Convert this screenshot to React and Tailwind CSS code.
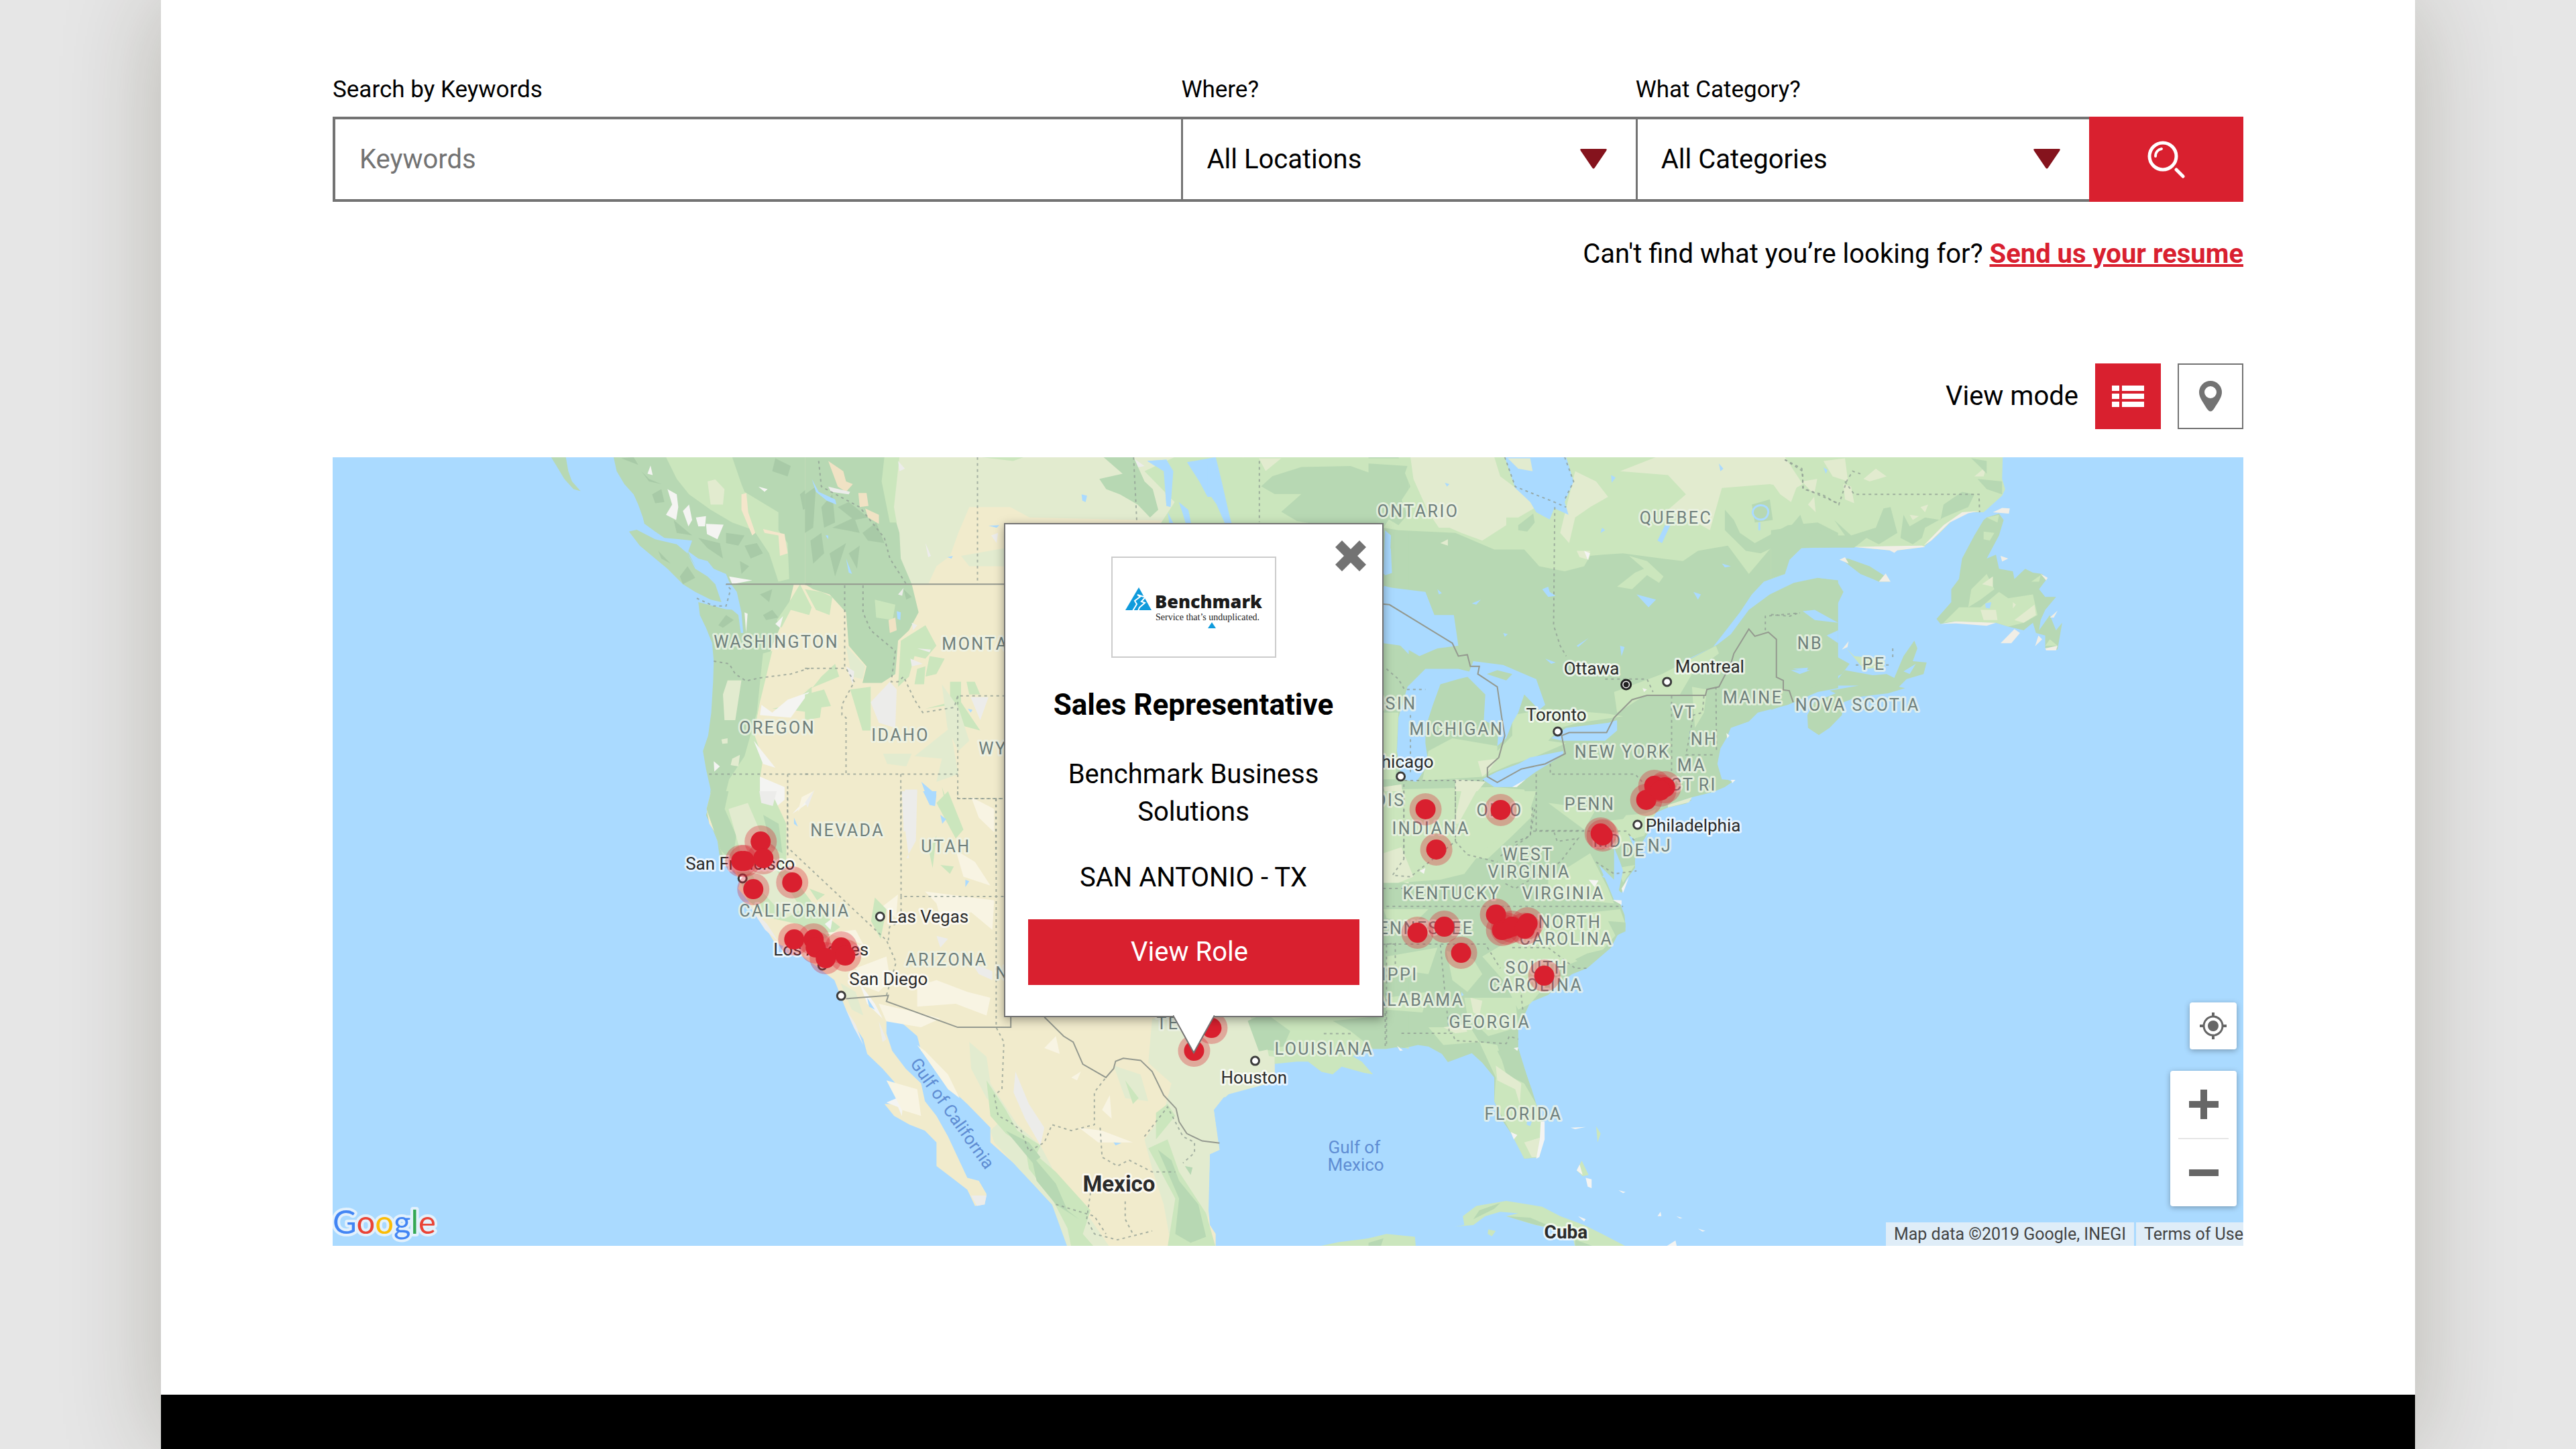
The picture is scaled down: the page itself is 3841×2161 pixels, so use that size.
import { useState } from "react";

const SEA = "#aadaff";
const FOREST = "#b7d8b3";
const LIGHT = "#cbe6bd";
const PALE = "#e2ebcf";
const TAN = "#f1ebcc";
const HILL = "#a8caa7";
const SNOW = "#f4f4f2";
const CREAM = "#f8f4e3";

// Each survey sheet has its own origin and scale inside the map
const SHEETS = {
  northwest: "translate(490 680) scale(0.4592 0.3827)",
  southwest: "translate(1000 1180) scale(0.574 0.44)",
  plains: "translate(1200 680) scale(0.4082 0.3827)",
  central: "translate(1800 680) scale(0.3333 0.7589)",
  northeast: "translate(2040 680) scale(0.4464 0.3827)",
  atlantic: "translate(2640 680) scale(0.4592 0.3827)",
  southeast: "translate(2040 1180) scale(0.4464 0.44)",
};

const SHAPES = [
  // land
  ["northwest", FOREST, "M925 5L935 60 960 110 990 150 1005 190 1020 240 1025 265 1060 295 1090 320 1140 325 1180 330 1165 380 1190 430 1230 460 1280 490 1300 540 1320 600 1290 598 1200 570 1205 620 1225 670 1245 730 1250 800 1248 880 1242 1000 1232 1090 1215 1150 1225 1220 1240 1300 1235 1360 1225 1400 1245 1450 1262 1500 1270 1568H1600V5Z"],
  ["northwest", FOREST, "M975 295L1000 288 1060 325 1130 345 1165 380 1190 440 1230 470 1255 500 1275 570 1240 560 1190 530 1150 500 1100 440 1060 400 1010 350Z"],
  ["northwest", FOREST, "M722 5H770L778 60 790 100 818 138 795 130 765 90 740 40Z"],
  ["southwest", TAN, "M105 0L93 60 100 110 120 150 130 200 165 270 180 310 175 330 200 370 225 430 245 460 268 510 330 550 375 590 425 640 440 690 455 740 475 790 500 840 510 890 550 940 590 1000 605 1040 590 1060 555 1060 580 1100 620 1130 660 1150 690 1190 690 1270 730 1310 770 1350 790 1405 815 1400 820 1365 800 1320 770 1310 745 1240 720 1170 690 1100 660 1050 650 990 610 940 575 880 560 820 560 770 600 785 640 830 650 880 690 920 720 1000 770 1060 830 1140 830 1190 890 1260 940 1330 990 1400 1010 1440 1030 1500 1030 1545H1415L1415 1500 1400 1470 1395 1400 1400 1230 1425 1215 1420 1180 1415 1130 1410 1080 1440 1030 1500 1000 1568 985V0Z"],
  ["plains", TAN, "M0 5H1640V1600H0Z"],
  ["central", LIGHT, "M0 0H900V1165L840 1158 800 1165 700 1165 650 1180 690 1190 740 1215 700 1212 600 1200 560 1215 510 1210 450 1190 400 1190 290 1195 250 1215 130 1240 80 1260H0Z"],
  ["northeast", FOREST, "M0 5H1568V355L1500 475 1568 485V905L1500 920 1440 950 1400 970 1300 1000 1270 1035 1210 1060 1195 1100 1175 1140 1165 1200 1180 1260 1200 1262 1215 1270 1190 1290 1150 1310 1080 1330 1040 1345 1080 1340 1060 1355 1000 1370 960 1390 940 1430 920 1480 880 1520 860 1568H0Z"],
  ["atlantic", LIGHT, "M0 5H752L750 90 760 130 750 155 690 220 640 220 590 250 540 310 495 355 400 370 270 355 100 358 60 405 45 460 0 478Z"],
  ["atlantic", FOREST, "M0 550L60 500 150 475 215 490 235 530 215 580 165 612 110 600 150 640 205 640 200 680 170 700 200 720 210 780 255 810 230 850 180 880 130 905 60 920 75 960 0 990Z"],
  ["atlantic", FOREST, "M200 895L240 835 330 855 375 850 400 865 430 780 465 720 475 750 460 800 505 805 495 850 440 870 415 900 435 905 380 925 280 940 235 960 230 1010 190 1060 155 1088 120 1060 118 1010 140 960 210 925 190 915 285 895Z"],
  ["atlantic", LIGHT, "M245 750L270 780 340 790 370 800 365 825 300 830Z"],
  ["atlantic", FOREST, "M700 240L740 225 755 250 740 310 700 400 730 385 740 440 785 450 790 480 825 440 850 455 880 460 895 480 870 520 890 550 925 550 890 600 875 640 870 680 905 620 925 680 945 650 930 755 890 750 890 700 860 690 850 650 820 680 770 665 730 650 690 655 600 645 550 655 537 635 585 570 585 520 610 480 620 400 660 310 690 250Z"],
  ["atlantic", FOREST, "M225 400L250 400 320 430 365 465 385 490 350 490 290 460Z"],
  ["southeast", FOREST, "M0 0H980L960 60 940 130 910 180 890 230 890 260 860 300 845 345 830 330 825 300 840 380 855 420 858 460 830 490 810 530 760 550 730 600 680 620 640 650 600 690 540 715 520 760 500 800 500 870 520 940 545 1010 560 1060 585 1130 585 1180 570 1240 520 1245 490 1180 450 1120 420 1050 420 970 380 920 345 888 265 918 245 890 200 865 165 860 120 870 50 865 0 865Z"],
  ["southeast", LIGHT, "M290 1475L320 1470 315 1440 360 1405 460 1388 580 1408 640 1440 720 1470 780 1500 865 1545H690L680 1500 600 1480 540 1465 460 1440 500 1430 440 1425 390 1440 350 1470Z"],
  ["southeast", LIGHT, "M-180 1545L-100 1528 0 1515 60 1500 155 1510 158 1545Z"],
  ["southeast", LIGHT, "M400 1485L425 1490 412 1508 398 1500ZM695 1285L712 1252 735 1300 715 1305ZM760 1135L775 1160 765 1190Z"],

  // canadian interior
  ["northwest", LIGHT, "M1095 5H1310L1340 110 1350 140 1460 220 1460 290 1490 340 1495 480 1460 490 1430 380 1380 290 1310 260 1240 210 1170 150 1130 90Z"],
  ["northwest", PALE, "M1230 100L1255 92 1285 130 1280 190 1240 190Z"],
  ["northwest", "#f4e6cb", "M1340 150L1356 145 1362 220 1385 300 1375 310 1340 210ZM1410 285L1480 305 1490 380 1465 390 1460 310 1415 300Z"],
  ["northwest", TAN, "M1510 500H1600V1600H1490L1450 1400 1390 1240 1370 1150 1400 950 1410 860 1440 740 1490 600Z"],
  ["northwest", LIGHT, "M1410 770L1440 760 1400 960 1380 1080 1410 1180 1400 1260 1450 1400 1490 1600H1290L1265 1500 1270 1400 1300 1260 1350 1170 1390 1000Z"],
  ["northwest", PALE, "M1295 875H1340L1320 1030H1285L1280 930ZM1275 1105L1295 1100 1295 1120 1278 1122ZM1310 1180L1335 1165 1330 1210 1305 1205ZM1325 1390L1360 1365 1400 1440 1380 1520 1330 1500Z"],
  ["northwest", LIGHT, "M1455 640L1500 560 1530 500 1568 590 1560 620 1500 600 1470 670ZM1440 985L1500 970 1568 900V1000L1500 990Z"],
  ["northwest", HILL, "M1015 60L1040 90 1080 110 1040 100ZM1050 150L1080 130 1090 180 1060 185ZM1120 250L1150 280 1180 310 1130 300ZM1200 320L1270 340 1280 400 1230 360ZM1290 300L1350 310 1330 350 1290 340ZM1350 350L1390 340 1410 380 1370 400ZM1070 370L1110 420 1080 400ZM1140 470L1165 430 1190 475 1150 500ZM1265 660L1290 620 1315 640 1280 670ZM1400 540L1440 520 1430 570ZM1410 620L1440 600 1460 630 1420 640ZM1450 10L1500 40 1490 80 1440 60ZM1530 150L1560 120V200L1540 210ZM1335 410L1365 430 1340 460ZM950 10L990 5 1005 35Z"],
  ["northwest", SNOW, "M1100 130L1130 150 1135 200 1128 250 1095 230 1115 190ZM1150 215L1170 190 1180 250 1168 275ZM1192 240L1225 235 1222 275 1200 275ZM1225 265L1282 268 1262 325 1228 305ZM1035 70L1045 38 1052 75ZM1395 120L1425 130 1415 140ZM1300 470L1375 485 1310 500ZM1250 1190L1270 1210 1252 1230ZM1380 1110L1450 1215 1410 1200ZM1400 1250L1480 1290V1340L1450 1370 1400 1360ZM1490 950L1560 920 1500 1020 1400 1010 1405 970 1440 1000ZM1350 610L1360 615 1355 690ZM1505 1395L1555 1330 1560 1350ZM1450 655L1475 625 1465 670Z"],
  ["plains", PALE, "M300 5H1600V260L820 240 750 200 600 200 560 300 530 390 480 430 450 500 390 500 340 430 310 270Z"],
  ["plains", FOREST, "M0 5H310L290 80 325 230 345 300 350 400 390 500 415 610 380 680 340 720 330 850 280 885 210 885 225 820 160 740 150 610 90 540 30 520 0 500Z"],
  ["plains", LIGHT, "M290 5H345L325 200 335 260 310 260 280 100ZM255 560L330 580 320 640 260 630ZM350 720L440 660 480 740 440 790 400 780 380 860 340 900ZM440 860L455 780 510 790 480 850ZM400 890L410 830 440 820 435 890ZM165 910L240 900 240 1070 210 1070ZM530 880H570V960L640 1070 570 1050 530 970 440 985 530 960ZM0 930L70 910 95 975 60 980 55 1020 0 1030ZM0 520L40 600 90 620 100 550 60 530ZM500 1290L520 1350 550 1480 530 1450ZM60 860L110 810 125 860 0 915 30 900ZM590 880L620 880 640 930 600 930Z"],
  ["plains", PALE, "M150 740L220 820 210 870 170 860ZM285 1160L390 1160 370 1210 300 1200ZM400 1170L530 1060 560 1240 480 1270 500 1180ZM570 390L730 360V430L600 430ZM500 890L560 980 600 1110 560 1150 520 1060Z"],
  ["plains", HILL, "M0 150L40 120 30 280 0 300ZM60 200L100 150 110 260 70 280ZM20 330L60 300 70 380 30 420ZM100 280L180 240 200 300 150 290ZM160 380L200 350 190 440ZM210 300L260 260 290 340 230 330ZM90 380L150 340 110 470ZM120 200L160 180 230 240 180 250ZM360 520L390 550 370 560Z"],
  ["plains", "#f0e2c4", "M85 20L140 60 150 100 175 110 150 140 120 120ZM195 145L225 145 232 195 200 200ZM220 205L270 230V265L230 240ZM305 640L330 630 335 680 310 690Z"],
  ["plains", "#ececea", "M240 960L310 880 335 910 330 1060 270 1040ZM605 940H670L640 1030ZM85 120L165 140 160 150 95 140ZM150 820L180 840 175 890ZM365 1300L410 1300 405 1500 370 1568H380L365 1450ZM340 20L365 50 345 60ZM340 540L360 515 355 545ZM390 650L410 660 395 680ZM410 750L460 755 455 765ZM385 790L430 810 390 820ZM0 1350L35 1300 10 1370ZM1200 10L1240 40 1215 45ZM680 310L705 300 700 340ZM440 340L460 390 450 395Z"],
  ["plains", SEA, "M25 90L50 140 110 170 115 190 80 175 40 140ZM75 310L85 310 85 325ZM150 400L172 460 160 455ZM335 605L350 610 348 640 338 635ZM1010 150L1030 155 1025 180 1013 175ZM1250 20L1320 15 1345 60 1335 190 1320 195 1310 60ZM1370 180L1400 210 1415 260 1395 255ZM670 272L710 270 700 280ZM425 1270L480 1320 475 1365 455 1360ZM595 985L612 990 605 1000ZM520 395L540 390 535 400Z"],
  ["plains", FOREST, "M1090 5H1200L1240 100 1270 130 1290 210 1260 240 1215 190 1150 150 1100 130 1075 90 1160 70Z"],
  ["plains", LIGHT, "M1240 60L1350 5H1600V262H1300L1350 180ZM640 5H800L760 20Z"],
  ["plains", SEA, "M1250 20L1320 15 1345 60 1335 200 1320 195 1310 60ZM1395 25L1500 5 1520 90 1550 180 1580 262H1540L1520 160 1470 160 1440 100ZM1365 180L1400 210 1410 262H1390L1375 210ZM1325 220L1345 262H1330Z"],
  ["central", LIGHT, "M40 5H900V140H110Z"],
  ["central", FOREST, "M240 60L290 40 420 22 640 20 800 45 900 25V140H560L400 128 330 110 420 75 300 75ZM785 150H900V270L785 260Z"],
  ["central", PALE, "M230 5H330L260 30ZM780 760L860 790 900 820V840L785 830Z"],
  ["central", SEA, "M0 20L20 5 60 65 110 135H80L40 95 0 70ZM790 185L820 182 825 230 792 235ZM790 255L900 270V390L790 340Z"],

  // california and mexico
  ["southwest", LIGHT, "M105 0H260L300 110V250L340 330 380 400 440 460 400 500 330 450 260 430 200 370 170 270 130 200 93 60Z"],
  ["southwest", FOREST, "M105 0H150L140 60 170 150 160 240 130 200 93 60ZM240 80L280 110 290 210 260 190Z"],
  ["southwest", PALE, "M150 60L200 40 240 160 280 280 340 400 300 430 230 330 180 200ZM440 650L480 680 500 760 470 740Z"],
  ["southwest", "#ececea", "M230 0H275L265 50 235 40ZM600 0H640L630 100 605 140ZM455 740L480 790 500 860 475 800ZM205 390L250 450 280 510 245 470ZM540 780L560 840 550 850ZM895 950L930 1060 970 1140 960 1200 920 1110 890 1020ZM780 1370L820 1370 815 1400 795 1405ZM960 1270L1010 1330 1000 1340ZM1010 1430L1028 1490 1020 1490ZM690 490L720 500 700 530ZM780 580L835 610V640L800 620Z"],
  ["southwest", SNOW, "M490 650L530 720 550 770 510 720ZM560 1055L605 1030 600 1100 590 1070ZM400 450L420 430 415 470Z"],
  ["southwest", CREAM, "M480 600L560 560 570 640 540 680 500 660ZM550 390L590 350 585 430ZM660 340L840 370 835 470 780 410 700 430 690 380ZM690 640L770 680 830 700 820 760 740 720 640 730 640 660ZM640 860L660 880 720 960 750 1040 720 1010ZM540 720L640 750 700 770 650 800 560 780ZM560 980L640 1010 650 1100 600 1080ZM970 870L1000 830 1010 890ZM1060 1140L1120 1150 1200 1190 1110 1190ZM1040 970L1065 950 1055 980ZM400 480L480 470 500 520 460 500ZM740 200L790 240 830 320 760 290ZM780 20L840 60V140L800 90ZM340 20L370 0 330 70ZM1120 1080L1140 1030 1145 1110Z"],
  ["southwest", PALE, "M775 850L820 900 830 990 860 1050 900 1130 960 1200 1000 1300 1040 1400 1090 1450 1140 1545H1030L990 1400 940 1330 890 1260 840 1190 830 1150 870 1100 820 1040 780 940ZM1250 770H1568V985L1440 1030 1410 1080 1425 1215 1400 1230 1395 1500 1415 1545H1300L1280 1400 1250 1280 1230 1180 1280 1090 1300 990 1240 920ZM1150 930L1220 960 1240 1050 1180 1040Z"],
  ["southwest", LIGHT, "M820 980L870 1080 900 1150 960 1200 950 1230 870 1160 830 1100ZM1260 1090L1290 1060 1310 1100 1260 1180ZM920 1200L1000 1290 1090 1420 1070 1500 1100 1545H1040L1030 1480 990 1380 930 1280ZM1240 1210L1290 1180 1320 1290 1390 1430 1415 1545H1290L1310 1380ZM690 40L720 0 760 130 740 160ZM1180 980L1215 1040 1200 1060ZM530 360L560 400 545 500 520 440ZM1470 770H1568V900L1500 890ZM670 200L690 150 680 260ZM700 250L735 255 725 280ZM360 330L400 350 380 370Z"],
  ["southwest", FOREST, "M870 1150L930 1190 960 1240 940 1260ZM935 1230L1000 1330 1030 1420 1060 1450 1000 1400 950 1320ZM1265 1215L1300 1250 1320 1320 1370 1400 1390 1510 1350 1530 1310 1500 1320 1380ZM1490 780L1568 775V880L1510 870ZM1335 1270L1355 1275 1350 1300Z"],
  ["southwest", SEA, "M655 0H690L685 50 670 40ZM700 80L715 95 705 110ZM510 700L530 740 515 730ZM765 300L775 305 765 325ZM1150 1190L1170 1192 1155 1200ZM320 90L330 120 320 110Z"],
  ["central", PALE, "M0 1095H180L260 1150 280 1190 250 1215 130 1240 80 1260H0Z"],
  ["central", FOREST, "M180 1110L260 1095 370 1130 340 1160 230 1170ZM560 1110L900 1095V1158L800 1165 740 1165 640 1130ZM790 380L880 380 900 430 850 460 790 430ZM790 620H860V650H790ZM840 1000L900 980V1060L850 1050Z"],

  // ontario, quebec and the lakes
  ["northeast", LIGHT, "M100 5H1568V350L1500 330 1350 350 1270 460 1200 350 1100 370 1050 410 980 400 850 380 780 385 740 390 720 430 655 450 570 430 520 365 420 365 290 300 100 290 50 280 140 120Z"],
  ["northeast", PALE, "M140 5H420L440 80 520 150 560 200 500 240 460 240 460 270 420 300 380 330 310 300 270 280 235 280 200 220 150 90ZM690 60L760 100 800 160 740 200 690 240 670 340 640 300ZM840 60L960 5H1390L1450 110 1420 130 1340 110 1180 125 1140 290 1080 250 1000 210 1060 150 1000 75Z"],
  ["northeast", FOREST, "M0 30L130 40 100 140 130 230 100 270 0 200ZM500 270L550 225 555 260 530 295 500 290ZM1190 210L1220 250 1240 300 1290 340 1400 270 1500 260 1568 300V350L1440 360 1380 340 1310 380 1260 370 1190 290ZM1280 190L1340 170 1350 250 1290 260Z"],
  ["northeast", LIGHT, "M830 510L890 455 920 440 870 390 930 410 985 470 970 495 930 465 880 520ZM480 1010L600 985 800 1005 850 1015 700 1040 640 1060 600 1110 660 1120 540 1180 480 1200 400 1240 430 1150 480 1090ZM820 920L980 850 1160 740 1170 770 1080 850 1040 930 920 935 860 980 830 1000ZM200 1150L280 1100 430 1130 430 1180 390 1250 180 1265ZM50 1000L100 1000 90 1260H50ZM60 1300L420 1290 520 1300 550 1400 480 1480 400 1568H50ZM1080 900L1130 910 1120 1000 1090 1060ZM860 1400L960 1390 920 1480 860 1500 800 1490Z"],
  ["northeast", PALE, "M50 1290L110 1280 115 1330 60 1340ZM290 1260L390 1270 340 1340 320 1440 290 1440ZM365 1190L430 1180 400 1230 380 1250ZM240 340L265 325 265 350ZM695 370L740 370 735 405 705 395ZM1000 1360L1080 1330 1070 1350 1000 1370Z"],
  ["northeast", SEA, "M455 5H660L685 100 655 180 668 230 640 215 620 205 605 248 560 220 540 180 490 125Z"],
  ["northeast", PALE, "M465 10H540L548 60 500 50Z"],
  ["northeast", SEA, "M50 510L190 530 220 620 285 620 300 740 230 750 170 780 110 740 50 730ZM130 900L190 830 300 830 370 850 300 870 240 890 215 970 190 1060 190 1120 200 1200 160 1270 110 1260 95 1150 100 1020ZM350 800L450 815 560 870 590 970 570 990 520 930 500 1000 480 1040 460 1100 430 1130 435 1060 385 1030 390 930 330 860ZM380 1260L430 1230 500 1200 540 1175 650 1150V1165L560 1230 490 1290 420 1290ZM610 1100L660 1060 800 1040 830 1030V1070L790 1110 650 1110Z"],
  ["northeast", SEA, "M1580 355L1445 360 1400 410 1390 460 1320 490 1280 540 1240 610 1180 700 1150 745 1070 790 1060 800 1165 735 1210 695 1270 600 1340 540 1420 495 1500 475 1580 485Z"],
  ["northeast", SEA, "M965 330L990 270 1010 265 980 340ZM580 520L600 510 605 530 625 545 600 550ZM895 540L960 560 935 590ZM1085 530L1110 540 1100 560ZM1180 420L1210 430 1190 435ZM780 280L790 290 775 300ZM230 520L245 535 235 540ZM345 575L375 560 360 580ZM810 75L825 85 812 105ZM1170 30L1185 50 1175 60ZM55 290L75 310 70 460H50ZM1410 835L1475 835 1440 850ZM590 790L625 805 610 810ZM840 740L855 745 845 780ZM450 690L465 695 455 705ZM695 740L735 710 700 745ZM255 105L270 110 262 120ZM1450 605L1490 600 1568 650 1490 640ZM1530 700L1568 680V730Z"],
  ["northeast", FOREST, "M395 850L430 835 480 850 460 875Z"],
  ["northeast", "none", "M1283 225C1280 185 1335 180 1335 220 1330 260 1290 255 1283 225ZM1305 260V290", "#aadaff", 3],
  ["northeast", SNOW, "M720 370L740 380 732 405ZM480 1290L525 1260 495 1290ZM1210 1262H1225L1215 1275ZM1195 1080L1205 1090 1198 1100ZM915 905L930 910 920 920Z"],
  ["atlantic", PALE, "M0 20L60 30 90 100 65 180 30 150 0 100ZM100 100L150 90 140 150ZM170 20L240 10 250 100 200 80ZM300 90L340 50 375 80 320 100ZM660 80L700 40 690 80ZM120 190L140 160 145 220ZM235 110L260 120 270 185 240 170ZM485 200L510 190 500 220ZM450 230L480 235 460 250Z"],
  ["atlantic", FOREST, "M0 290L60 280 95 230 120 320 170 285 210 310 240 310 205 250 260 310 340 280 365 205 388 200 410 300 350 345 310 320 270 358H100L60 405 45 460 0 478ZM420 320L430 230 450 275 500 240 550 250 560 190 620 140 660 150 640 200 560 240 500 280 490 320 460 345ZM670 90L750 100 750 150 700 130ZM650 10L700 20V70L680 45Z"],
  ["atlantic", LIGHT, "M640 590L650 520 700 460 725 520 680 560ZM560 650L610 590 680 590 740 530 770 555 850 540 865 620 820 650 770 665 730 650 600 645ZM690 295L725 300 710 330 690 325ZM700 240L740 230 735 260ZM845 490L875 465 870 490ZM890 740L905 715 930 740Z"],
  ["atlantic", PALE, "M680 600L730 600 735 640 690 640ZM790 640L855 580 860 620 820 650ZM685 500L720 470V510ZM785 570L795 580 785 595Z"],
  ["atlantic", "#f1eee6", "M222 405L240 395 252 420ZM350 490L372 458 388 490ZM720 220L750 203 775 205 772 225ZM745 730L790 675 808 690 780 730ZM857 742L868 700 880 715ZM890 750L930 740 925 758H893ZM905 630L930 603 918 630ZM745 390L770 400 750 412ZM875 460L898 475 893 485ZM230 755L252 722 248 745ZM270 355L380 352 490 350 500 355 410 368 400 378 385 368ZM495 350L560 270 620 220 680 214 640 224 580 260 520 330ZM550 655L600 645 730 650 700 662 600 653Z"],
  ["atlantic", SEA, "M695 575L715 570 710 595 697 592ZM170 45L183 55 178 70ZM70 830L120 825 115 840ZM430 840L470 810 450 850Z"],

  // southeast
  ["southeast", LIGHT, "M25 0H560L540 60 480 130 380 200 320 280 240 300 100 310 50 310V150ZM600 40L760 60 720 130ZM560 430L840 400 858 450 780 540 640 600 540 720 500 740 450 640 380 560 480 500ZM370 850L430 860 460 960 520 990 560 1060 585 1140 570 1240 520 1245 420 1050 425 970ZM600 300L740 210 800 330 820 380 600 360ZM260 540L350 570 380 620 330 680 280 640ZM60 560L230 530 200 620 60 600ZM320 700L490 700 500 800 400 830 330 760ZM850 190L930 130 960 60 890 90 800 100ZM830 260L890 250 850 310ZM50 400L200 400 150 450 60 430ZM60 700L200 680 180 750 60 740ZM200 800L340 800 370 850 250 860Z"],
  ["southeast", PALE, "M50 210L110 190 150 290 100 310 50 310ZM310 0H360L300 110H285ZM425 930L510 990 505 1060 490 1010 430 980ZM520 1190L585 1170 570 1240 545 1240ZM340 700L380 710 370 760 350 750ZM250 800L320 790 330 815 290 820Z"],
  ["southeast", FOREST, "M800 440L858 445V475L825 490ZM730 550L810 530 730 600 690 570ZM430 880L500 870 540 1000 520 990 460 940Z"],
  ["southeast", SEA, "M820 190L840 240 850 270 835 340 840 380 820 370 800 320 770 250 820 300ZM530 1115L545 1120 540 1135 528 1130ZM790 280L825 310 780 290ZM310 680L318 690 310 695ZM870 150L885 160 900 195 890 200Z"],
  ["southeast", SNOW, "M735 300L768 302 755 325ZM845 330L870 290 850 345ZM815 368L845 370V385ZM575 1120H588V1180L570 1240 560 1245 572 1180ZM475 1155L497 1165 485 1180ZM675 1140L725 1138 690 1145ZM695 1285L705 1265 715 1300ZM725 1310L745 1315V1345L732 1340ZM965 1440L975 1425 978 1440ZM835 1352L858 1358 850 1362ZM1100 1482L1125 1490 1115 1492ZM1028 1440L1048 1446 1040 1448ZM990 1545L1025 1522 1030 1545ZM170 270L190 260 185 280ZM485 870L500 868 497 880ZM95 862L115 878 105 880ZM700 1440L725 1450 720 1458Z"],
  ["southeast", FOREST, "M350 1450L370 1420 440 1395 420 1415ZM460 1440L540 1445 620 1480 560 1470ZM690 1520L760 1545H690ZM0 1530L50 1515 40 1545H0Z"],
  ["northwest", SEA, "M1165 370L1190 430 1220 460 1260 480 1280 520 1275 560 1310 600 1330 620 1338 690 1346 690 1340 610 1325 530 1300 490 1290 460 1250 440 1230 410 1200 400ZM1025 265L1085 320 1140 345 1090 330 1050 305Z"],
];

const SOLID_BORDERS = [
  ["northwest", "M1290 500H1568"],
  ["plains", "M0 500H730"],
  ["southwest", "M455 703L565 692 560 712 745 800H883V765M970 765L1020 830 1045 850 1070 925 1130 970 1150 940 1155 915 1175 905 1220 912 1250 950 1280 1030 1312 1075 1320 1120 1340 1160 1380 1185 1425 1192"],
  ["northeast", "M50 578L70 580 280 730 300 780 330 775 340 820 370 820 365 850 430 900 445 1020 455 1090 435 1175 397 1215V1250L430 1272 510 1220 590 1200 657 1160 645 1090 670 1078H795L820 1020 880 950 930 933H1125L1130 910 1170 900 1210 810 1220 770 1270 675 1290 703 1335 687 1362 715V862L1385 875V912L1405 915 1418 960"],
];

const DASHED_BORDERS = [
  ["northwest", "M1195 555L1250 585H1290L1305 520 1290 500M1250 800L1300 810 1320 850 1355 877 1400 865 1500 850 1568 825M1235 1240H1568M1490 1240V1568"],
  ["plains", "M630 5V500M1200 5L1212 262M145 505V830M0 828H150L180 880 135 970V1010L150 1020V1240M0 1240H558M212 505V610L240 680 330 760 315 880H340L360 860 400 950 430 1000 545 980 558 935H730M558 935V1335H730M350 1240V1568M697 1335V1568M50 20L60 120 200 200 290 320 310 400 370 500"],
  ["southwest", "M303 0V190L560 505 585 580 560 692M598 0V357H865M598 357V440L568 460 565 505M745 0V25H865M845 25V800L865 850 860 1010 840 1030 850 1100 880 1120 910 1150 930 1220 970 1190 990 1130 1040 1150 1100 1130 1100 1020 1130 970M1115 1140L1120 1240 1160 1270 1190 1250 1250 1290 1310 1290M1230 1170L1290 1070 1330 1170 1360 1190 1360 1225 1330 1260M1000 1400L1100 1440 1130 1500M1180 1390V1450L1200 1500M1090 1360L1080 1450 1100 1500 1160 1520 1250 1490"],
  ["northeast", "M455 5L490 120 620 180 660 200M655 5L685 100 655 170M622 200L618 660 640 740 660 780M790 870L930 870 950 920M1012 935V1240M1160 900L1162 1150M1120 935L1115 1000 1085 1010 1060 1165 1150 1165M607 1200V1240H890L930 1290M560 1240V1460H720M120 1265H385M290 1265V1500M118 1280V1568M140 1010V1240M1325 680V625L1440 612M1390 15L1450 60V125L1568 185M60 830L100 870 120 910 190 910M548 1370L540 1480 480 1510"],
  ["atlantic", "M45 15L100 50 105 130 165 150 220 190 245 100 265 60 290 70M240 100L270 150H675L677 220M0 618L60 625 95 610M275 815L390 815M395 750V790"],
  ["southeast", "M118 0V230L80 285 140 290 290 170V0M290 170L330 215 430 240M550 135H860L890 170M555 60L540 150 440 220M620 140L630 170 700 160 640 240 490 330 450 310M60 390H850M60 518H390L440 600M240 520L255 680 270 820M60 520V860M110 820H280L290 845 460 855 470 830 500 840M480 530H600L690 600 730 600M510 690L515 740M760 240L820 280 895 270"],
  ["central", "M232 10V130M785 850H900M785 960L840 958V1000M795 1095V1160M520 1135H640"],
];

const STATES = [
  ["WASHINGTON", 1064, 966], ["OREGON", 1102, 1094], ["IDAHO", 1299, 1105], ["MONTANA", 1404, 969],
  ["WYOMING", 1459, 1125], ["NEVADA", 1208, 1247], ["UTAH", 1373, 1271], ["CALIFORNIA", 1102, 1367],
  ["ARIZONA", 1350, 1440], ["NEW MEXICO", 1484, 1460], ["TEXAS", 1724, 1535], ["ONTARIO", 2053, 771],
  ["QUEBEC", 2444, 781], ["NB", 2679, 968], ["PE", 2776, 999], ["NOVA SCOTIA", 2676, 1060],
  ["MAINE", 2568, 1049], ["VT", 2493, 1071], ["NH", 2520, 1111], ["MA", 2500, 1150],
  ["CT", 2490, 1179], ["RI", 2532, 1179], ["NEW YORK", 2347, 1130], ["PENN", 2332, 1208],
  ["MICHIGAN", 2101, 1096], ["WISCONSIN", 2112, 1058, "end"], ["ILLINOIS", 2095, 1202, "end"],
  ["INDIANA", 2075, 1244], ["OHIO", 2201, 1217], ["WEST", 2240, 1283], ["VIRGINIA", 2218, 1309],
  ["KENTUCKY", 2091, 1341], ["VIRGINIA", 2269, 1341], ["TENNESSEE", 2197, 1393, "end"],
  ["NORTH", 2293, 1384], ["CAROLINA", 2265, 1409], ["SOUTH", 2244, 1452], ["CAROLINA", 2220, 1478],
  ["MISSISSIPPI", 2114, 1462, "end"], ["ALABAMA", 2183, 1500, "end"], ["GEORGIA", 2160, 1533],
  ["FLORIDA", 2213, 1670], ["LOUISIANA", 1900, 1573], ["MD", 2418, 1263, "end"], ["DE", 2418, 1277],
  ["NJ", 2456, 1270],
];

// name, label x, label baseline, dot x, dot y, anchor
const CITIES = [
  ["San Francisco", 1022, 1297, 1107, 1310],
  ["Las Vegas", 1324, 1376, 1312, 1367],
  ["Los Angeles", 1153, 1425, 1226, 1440],
  ["San Diego", 1266, 1469, 1254, 1485],
  ["Houston", 1820, 1616, 1871, 1582],
  ["Chicago", 2137, 1145, 2088, 1158, "end"],
  ["Toronto", 2275, 1075, 2322, 1091],
  ["Ottawa", 2331, 1006, 2424, 1021],
  ["Montreal", 2497, 1003, 2485, 1017],
  ["Philadelphia", 2453, 1240, 2441, 1230],
];

const JOBS = [
  [1134, 1255], [1105, 1284], [1110, 1284], [1138, 1280], [1181, 1316], [1123, 1326], [1184, 1401],
  [1213, 1401], [1216, 1413], [1231, 1429], [1254, 1413], [1260, 1425], [2125, 1207], [2237, 1208],
  [2141, 1267], [2386, 1243], [2389, 1246], [2454, 1193], [2466, 1172], [2482, 1174], [2475, 1179],
  [2113, 1391], [2153, 1382], [2230, 1364], [2239, 1387], [2246, 1385], [2254, 1382], [2277, 1377],
  [2273, 1385], [2178, 1421], [2302, 1455], [1806, 1533], [1780, 1567],
];

function MapCanvas() {
  return (
    <svg
      className="block h-full w-full bg-[#aadaff] font-[Roboto,sans-serif]"
      viewBox="496 682 2848 1176"
      preserveAspectRatio="xMidYMid slice"
      role="img"
      aria-label="Map of open roles"
    >
      {SHAPES.map(([sheet, fill, d, stroke, width], i) => (
        <g key={i} transform={SHEETS[sheet]}>
          <path d={d} fill={fill} stroke={stroke} strokeWidth={width} vectorEffect="non-scaling-stroke" />
        </g>
      ))}
      {DASHED_BORDERS.map(([sheet, d]) => (
        <g key={sheet} transform={SHEETS[sheet]}>
          <path d={d} fill="none" stroke="#8f9c93" strokeOpacity="0.75" strokeWidth="2" strokeDasharray="4 5" vectorEffect="non-scaling-stroke" />
        </g>
      ))}
      {SOLID_BORDERS.map(([sheet, d]) => (
        <g key={sheet} transform={SHEETS[sheet]}>
          <path d={d} fill="none" stroke="#94998f" strokeWidth="2" vectorEffect="non-scaling-stroke" />
        </g>
      ))}

      {/* State and province names */}
      <g className="text-[25px] tracking-widest" fill="#6f7f7c" stroke="#eef4e8" strokeOpacity="0.75" strokeWidth="6" paintOrder="stroke" strokeLinejoin="round">
        {STATES.map(([name, x, y, anchor], i) => (
          <text key={i} x={x} y={y} textAnchor={anchor}>{name}</text>
        ))}
      </g>

      {/* Cities */}
      <g className="text-[26px]" fill="#2b2b2b" stroke="#fff" strokeOpacity="0.7" strokeWidth="6" paintOrder="stroke" strokeLinejoin="round">
        {CITIES.map(([name, x, y, , , anchor]) => (
          <text key={name} x={x} y={y} textAnchor={anchor}>{name}</text>
        ))}
        <text className="text-[33px] font-bold" x="1614" y="1777">Mexico</text>
        <text className="text-[28px] font-bold" x="2302" y="1847">Cuba</text>
      </g>
      {CITIES.map(([name, , , cx, cy]) => (
        <circle key={name} cx={cx} cy={cy} r="6" fill="#fff" stroke="#3c3c3c" strokeWidth="3" />
      ))}
      <circle cx="2424" cy="1021" r="7" fill="#fff" stroke="#222" strokeWidth="3" />
      <circle cx="2424" cy="1021" r="4" fill="#222" />

      {/* Water names */}
      <g className="text-[26px]" fill="#5f8dd3">
        <text x="1980" y="1720">Gulf of</text>
        <text x="1979" y="1746">Mexico</text>
        <text transform="translate(1356 1586) rotate(54.6)">Gulf of California</text>
      </g>

      {JOBS.map(([cx, cy], i) => (
        <circle key={i} cx={cx} cy={cy} r="24" fill="#d9202f" fillOpacity="0.32" />
      ))}
      {JOBS.map(([cx, cy], i) => (
        <circle key={i} cx={cx} cy={cy} r="15" fill="#d9202f" />
      ))}
    </svg>
  );
}

function BenchmarkLogo() {
  return (
    <svg className="block h-full w-full" viewBox="0 0 242 147" role="img" aria-label="Benchmark">
      <path d="M39 44L58 78H19Z" fill="#0f9bdc" />
      <path d="M30 79L36 69 33 64 41 58 37 55 46 58 51 56 43 65 48 67 40 74 38 79" fill="none" stroke="#fff" strokeWidth="2" />
      <text className="font-['Open_Sans',sans-serif] text-[27px] font-extrabold" x="63" y="75" fill="#1b1b1b">Benchmark</text>
      <text className="font-['Liberation_Serif',serif] text-[14px]" x="64" y="93" fill="#222">Service that’s unduplicated.</text>
      <path d="M148 96L154 105H142Z" fill="#0f9bdc" />
    </svg>
  );
}

function JobPopup({ onClose }) {
  return (
    <div className="absolute top-[98px] left-[calc(50%-424px)] w-[566px] border-2 border-[#737373] bg-white px-[34px] pt-12 pb-[46px] text-center text-[40px] leading-[56px] shadow-[0_4px_14px_rgba(0,0,0,0.35)]">
      <button type="button" aria-label="Close" className="absolute top-6 right-6" onClick={onClose}>
        <svg className="block h-[46px] w-[46px]" viewBox="0 0 46 46" fill="#737373">
          <path d="M10 0L23 13 36 0 46 10 33 23 46 36 36 46 23 33 10 46 0 36 13 23 0 10Z" />
        </svg>
      </button>
      <div className="mx-auto h-[151px] w-[246px] border-2 border-[#ccc]">
        <BenchmarkLogo />
      </div>
      <h3 className="mt-[42px] text-[44px] font-bold">Sales Representative</h3>
      <p className="mt-12 px-4">Benchmark Business Solutions</p>
      <p className="mt-[42px]">SAN ANTONIO - TX</p>
      <a href="#role" className="mt-[34px] block bg-[#d9202f] py-[21px] pr-3 text-white">View Role</a>
      <svg className="absolute top-full left-[calc(50%-31px)] -mt-px h-[58px] w-[62px]" viewBox="0 0 62 58">
        <path d="M0 0L31 56 62 0" fill="#fff" stroke="#737373" strokeWidth="2" />
        <path d="M2 0H60" stroke="#fff" strokeWidth="4" />
      </svg>
    </div>
  );
}

function GoogleLogo() {
  return (
    <svg className="absolute bottom-0 left-0 h-18 w-40" viewBox="0 0 160 72" role="img" aria-label="Google">
      <text className="font-[Lato,sans-serif] text-[49px]" x="0" y="54" stroke="#e3f1fc" strokeWidth="8" strokeLinejoin="round" paintOrder="stroke">
        <tspan fill="#4285f4">G</tspan>
        <tspan fill="#ea4335">o</tspan>
        <tspan fill="#fbbc05">o</tspan>
        <tspan fill="#4285f4">g</tspan>
        <tspan fill="#34a853">l</tspan>
        <tspan fill="#ea4335">e</tspan>
      </text>
    </svg>
  );
}

function MapControls() {
  return (
    <div className="absolute right-2.5 bottom-[59px] flex flex-col items-end gap-8 text-[#666]">
      <button type="button" aria-label="Show my location" className="flex h-[70px] w-[70px] items-center justify-center rounded-sm bg-white shadow-[0_2px_8px_rgba(0,0,0,0.3)]">
        <svg className="h-10 w-10" viewBox="0 0 40 40">
          <circle cx="20" cy="20" r="14" fill="none" stroke="currentColor" strokeWidth="3" />
          <circle cx="20" cy="20" r="8" fill="currentColor" />
          <path d="M20 0V6M20 34V40M0 20H6M34 20H40" stroke="currentColor" strokeWidth="4" />
        </svg>
      </button>
      <div className="w-[99px] rounded-sm bg-white shadow-[0_2px_8px_rgba(0,0,0,0.3)]">
        <button type="button" aria-label="Zoom in" className="flex h-[100px] w-full items-center justify-center">
          <svg className="h-11 w-11" viewBox="0 0 44 44">
            <path d="M22 0V44M0 22H44" stroke="currentColor" strokeWidth="10" />
          </svg>
        </button>
        <div className="mx-3 h-0.5 bg-[#e6e6e6]" />
        <button type="button" aria-label="Zoom out" className="flex h-[100px] w-full items-center justify-center">
          <svg className="h-11 w-11" viewBox="0 0 44 44">
            <path d="M0 22H44" stroke="currentColor" strokeWidth="10" />
          </svg>
        </button>
      </div>
    </div>
  );
}

function SelectField({ id, label, option, last }) {
  return (
    <div className="flex flex-col gap-5">
      <label htmlFor={id} className="text-[35px] leading-10">{label}</label>
      <div className="relative">
        <select
          id={id}
          className={`h-[127px] w-full appearance-none border-y-4 border-l-[3px] border-[#737373] bg-white pl-[35px] text-[40px] outline-none ${last ? "" : "border-r-0"}`}
        >
          <option>{option}</option>
        </select>
        <svg className="pointer-events-none absolute top-12 right-[43px] h-[30px] w-10" viewBox="0 0 40 30">
          <path d="M2 0H38Q41 0 39 3L22 28Q20 31 18 28L1 3Q-1 0 2 0Z" fill="#85131d" />
        </svg>
      </div>
    </div>
  );
}

export default function App() {
  const [popupOpen, setPopupOpen] = useState(true);

  return (
    <div className="min-h-screen overflow-hidden bg-[#e6e6e6] px-60 font-[Roboto,sans-serif] text-black">
      <div className="flex min-h-screen flex-col bg-white shadow-[0_0_140px_rgba(40,35,10,0.24)]">
        <main className="px-64 pt-[114px] pb-[222px]">
          {/* Search form */}
          <form className="grid grid-cols-[1265fr_677fr_676fr_230fr] items-end" onSubmit={(e) => e.preventDefault()}>
            <div className="flex flex-col gap-5">
              <label htmlFor="keywords" className="text-[35px] leading-10">Search by Keywords</label>
              <input
                id="keywords"
                type="text"
                placeholder="Keywords"
                className="h-[127px] w-full border-y-4 border-l-4 border-[#737373] bg-white px-9 text-[40px] outline-none placeholder:text-[#737373]"
              />
            </div>
            <SelectField id="where" label="Where?" option="All Locations" />
            <SelectField id="category" label="What Category?" option="All Categories" last />
            <button type="submit" aria-label="Search" className="flex h-[127px] items-center justify-center bg-[#d9202f]">
              <svg className="h-14 w-14" viewBox="0 0 56 56" fill="none" stroke="#fff" strokeLinecap="round">
                <circle cx="23" cy="23" r="20" strokeWidth="5" />
                <path d="M43 43L53 53" strokeWidth="5" />
                <path d="M12 23C12 17 16 13 21 12" strokeWidth="4" />
              </svg>
            </button>
          </form>

          <p className="mt-[58px] text-right text-[40px] leading-10">
            Can't find what you’re looking for?{" "}
            <a href="#resume" className="font-bold text-[#d9202f] underline">Send us your resume</a>
          </p>

          {/* View mode */}
          <div className="mt-[143px] flex items-center justify-end gap-[25px] text-[40px]">
            <span>View mode</span>
            <button type="button" aria-label="List view" className="flex h-[98px] w-[98px] items-center justify-center bg-[#d9202f]">
              <svg className="h-8 w-12" viewBox="0 0 48 32" fill="#fff">
                <path d="M0 0H11V8H0ZM15 0H48V8H15ZM0 12H11V20H0ZM15 12H48V20H15ZM0 24H11V32H0ZM15 24H48V32H15Z" />
              </svg>
            </button>
            <button type="button" aria-label="Map view" className="flex h-[98px] w-[98px] items-center justify-center border-2 border-[#737373] bg-white">
              <svg className="h-[46px] w-[34px]" viewBox="0 0 34 46" fill="#737373" fillRule="evenodd">
                <path d="M17 0A17 17 0 0 1 34 17C34 25 28 32 22 42Q17 49 12 42C6 32 0 25 0 17A17 17 0 0 1 17 0ZM17 8A9 9 0 1 0 17 26A9 9 0 1 0 17 8Z" />
              </svg>
            </button>
          </div>

          {/* Map */}
          <div className="relative mt-[42px] h-[1176px]">
            <MapCanvas />
            {popupOpen && <JobPopup onClose={() => setPopupOpen(false)} />}
            <GoogleLogo />
            <MapControls />
            <div className="absolute right-0 bottom-0 flex gap-[3px] text-[25px] leading-[35px] text-[#444]">
              <span className="bg-[#dfedf8] px-3">Map data ©2019 Google, INEGI</span>
              <a href="#terms" className="bg-[#dfedf8] pl-3">Terms of Use</a>
            </div>
          </div>
        </main>
        <footer className="min-h-20 flex-1 bg-black" />
      </div>
    </div>
  );
}
